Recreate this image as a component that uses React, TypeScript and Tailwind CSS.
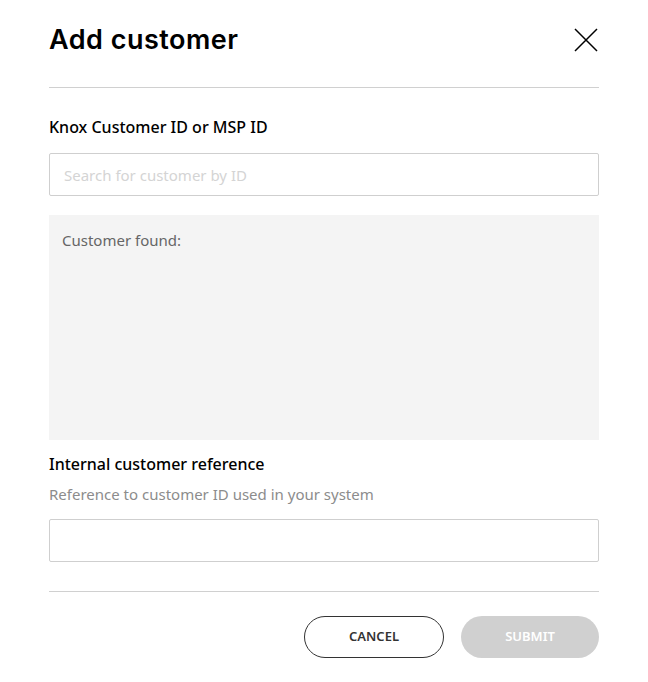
import React, { useState } from 'react';

const CloseIcon: React.FC<{ className?: string }> = ({ className }) => (
  <svg viewBox="0 0 24 24" className={className} fill="none" stroke="currentColor" strokeWidth={1.5}>
    <path d="M1 1 L23 23 M23 1 L1 23" />
  </svg>
);

const App: React.FC = () => {
  const [customerId, setCustomerId] = useState('');
  const [reference, setReference] = useState('');

  return (
    <div
      className="w-[648px] h-[682px] bg-white px-[49px] flex flex-col"
      style={{ fontFamily: '"Noto Sans", "Open Sans", sans-serif' }}
    >
      <div className="h-[80px] flex items-center justify-between">
        <h1
          className="text-[27px] font-semibold text-black tracking-[0.5px]"
          style={{ fontFamily: 'Inter, "Noto Sans", sans-serif' }}
        >
          Add customer
        </h1>
        <button aria-label="Close" className="w-[24px] h-[24px] mr-[1px] text-black">
          <CloseIcon className="w-[24px] h-[24px]" />
        </button>
      </div>
      <div className="mt-[7px] h-px bg-[#d0d0d0]" />

      <label className="mt-[27px] text-[16px] leading-[24px] font-medium text-black">
        Knox Customer ID or MSP ID
      </label>
      <input
        value={customerId}
        onChange={(e) => setCustomerId(e.target.value)}
        placeholder="Search for customer by ID"
        className="mt-[14px] h-[43px] w-full border border-[#cfcfcf] rounded-[2px] px-[14px] text-[15px] text-[#333] placeholder-[#d4d4d4] outline-none"
      />

      <div className="mt-[19px] h-[225px] bg-[#f4f4f4] px-[13px] pt-[14px]">
        <p className="text-[15px] leading-[22px] text-[#666]">Customer found:</p>
      </div>

      <label className="mt-[12px] text-[16px] leading-[24px] font-medium text-black">
        Internal customer reference
      </label>
      <p className="mt-[7px] text-[15px] leading-[22px] text-[#8c8c8c]">
        Reference to customer ID used in your system
      </p>
      <input
        value={reference}
        onChange={(e) => setReference(e.target.value)}
        className="mt-[14px] h-[43px] w-full border border-[#cfcfcf] rounded-[2px] px-[14px] text-[15px] text-[#333] outline-none"
      />

      <div className="mt-[29px] h-px bg-[#d0d0d0]" />

      <div className="mt-[24px] flex justify-end gap-[17px]">
        <button className="w-[140px] h-[42px] rounded-full border border-[#333] text-[13px] font-semibold text-[#333]">
          CANCEL
        </button>
        <button
          disabled
          className="w-[138px] h-[42px] rounded-full bg-[#d0d0d0] text-[13px] font-semibold text-white"
        >
          SUBMIT
        </button>
      </div>
    </div>
  );
};

export default App;
